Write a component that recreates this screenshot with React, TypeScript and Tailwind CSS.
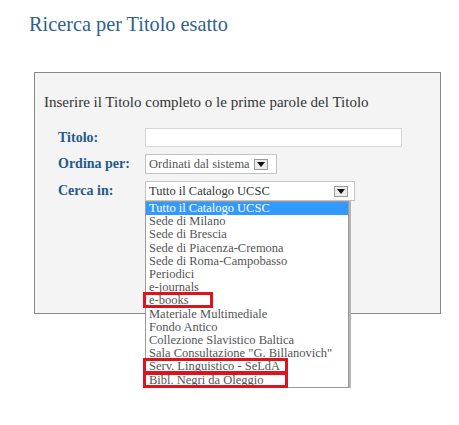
const serif = { fontFamily: '"Liberation Serif", "DejaVu Serif", serif' };

const options = [
  'Tutto il Catalogo UCSC',
  'Sede di Milano',
  'Sede di Brescia',
  'Sede di Piacenza-Cremona',
  'Sede di Roma-Campobasso',
  'Periodici',
  'e-journals',
  'e-books',
  'Materiale Multimediale',
  'Fondo Antico',
  'Collezione Slavistico Baltica',
  'Sala Consultazione "G. Billanovich"',
  'Serv. Linguistico - SeLdA',
  'Bibl. Negri da Oleggio',
];

// red marks drawn over the list, width per item
const marked: Record<string, string> = {
  'e-books': 'w-[70px]',
  'Serv. Linguistico - SeLdA': 'w-[145px]',
  'Bibl. Negri da Oleggio': 'w-[145px]',
};

function ArrowBox() {
  return (
    <span className="flex h-[11px] w-[14px] items-center justify-center border border-[#9a9a9a] bg-[#ececec]">
      <svg width="8" height="5" viewBox="0 0 8 5">
        <path d="M0 0h8L4 5z" fill="#111" />
      </svg>
    </span>
  );
}

export default function App() {
  return (
    <div className="min-h-screen bg-white" style={serif}>
      <h1 className="pl-[29px] pt-[11px] text-[20.3px] leading-[26px] text-[#2f618f]">
        Ricerca per Titolo esatto
      </h1>

      <div className="ml-[34px] mt-[35px] h-[242px] w-[407px] border border-[#8a8a8a] bg-[#f4f4f4]">
        <p className="ml-[9px] mt-[21px] text-[15px] leading-[17px] text-[#333]">
          Inserire il Titolo completo o le prime parole del Titolo
        </p>

        <div className="ml-[23px] mt-[17px] grid grid-cols-[87px_1fr] items-center gap-y-[7px] text-[14px] leading-[18px]">
          <span className="font-bold text-[#245a8a]">Titolo:</span>
          <div className="h-[19px] w-[257px] border border-[#d6d6d6] bg-white" />

          <span className="font-bold text-[#245a8a]">Ordina per:</span>
          <div className="flex h-[20px] w-[132px] items-center gap-[4px] border border-[#c4c4c4] bg-white pl-[3px] text-[12.5px] text-[#555]">
            <span>Ordinati dal sistema</span>
            <ArrowBox />
          </div>

          <span className="font-bold text-[#245a8a]">Cerca in:</span>
          <div className="relative w-[210px]">
            <div className="flex h-[20px] items-center justify-between border border-[#c4c4c4] bg-white pl-[3px] pr-[6px] text-[12.5px] text-[#333]">
              <span>Tutto il Catalogo UCSC</span>
              <ArrowBox />
            </div>
            <ul className="absolute left-0 top-full z-10 w-[204px] border border-[#9a9a9a] bg-white text-[12.5px] leading-[13.2px] text-[#555] shadow-[2px_0_0_#b5b5b5]">
              {options.map((o, i) => (
                <li
                  key={o}
                  className={
                    'relative pl-[3px] ' +
                    (i === 0 ? 'bg-[#3399ff] text-white' : '')
                  }
                >
                  {o}
                  {marked[o] && (
                    <span
                      className={
                        'absolute -left-[3px] top-[-2px] h-[16px] border-[3px] border-[#e0121b] ' +
                        marked[o]
                      }
                    />
                  )}
                </li>
              ))}
            </ul>
          </div>
        </div>
      </div>
    </div>
  );
}
